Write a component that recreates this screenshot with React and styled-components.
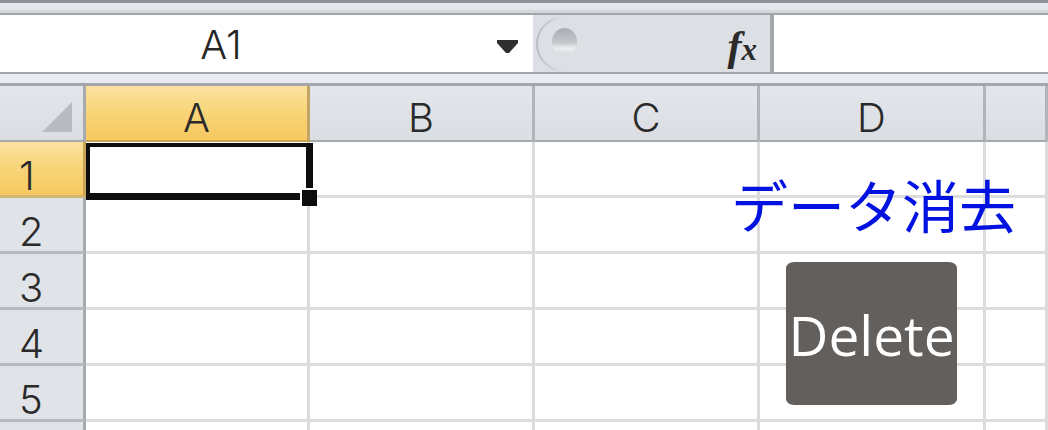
import React from "react";
import styled, { createGlobalStyle, css } from "styled-components";

const GlobalStyle = createGlobalStyle`
  html, body {
    margin: 0;
    padding: 0;
    background: #ffffff;
  }
`;

const Page = styled.div`
  position: relative;
  width: 1048px;
  height: 430px;
  overflow: hidden;
  background: #ffffff;
  font-family: "Liberation Sans", Arial, sans-serif;
  color: #262626;
`;

const TopStrip = styled.div`
  height: 13px;
  background: linear-gradient(
    to bottom,
    #8f9399 0,
    #8f9399 3px,
    #e6e9ed 3px,
    #e2e5e9 10px,
    #d3d7dc 10px,
    #d3d7dc 13px
  );
`;

const FormulaBar = styled.div`
  display: flex;
  height: 57px;
  border-top: 2px solid #a2a6ab;
  border-bottom: 2px solid #a2a6ab;
  background: #ffffff;
`;

const NameBox = styled.div`
  display: flex;
  align-items: center;
  width: 533px;
  flex: 0 0 533px;
`;

const thinFont = css`
  font-family: "Inter", "Liberation Sans", sans-serif;
  font-weight: 300;
  font-size: 40px;
  line-height: 1;
`;

const NameText = styled.div`
  ${thinFont};
  width: 442px;
  text-align: center;
  padding-top: 2px;
`;

const DropArrow = styled.svg`
  margin-left: 55px;
  margin-top: 5px;
`;

const FxZone = styled.div`
  display: flex;
  align-items: center;
  justify-content: space-between;
  width: 241px;
  flex: 0 0 241px;
  padding-right: 13px;
  box-sizing: border-box;
  background: #dcdfe3;
  border-right: 4px solid #a4a8ac;
`;

const FxLabel = styled.div`
  font-family: "Liberation Serif", "Times New Roman", serif;
  font-style: italic;
  font-weight: bold;
  color: #2b2b2b;
  line-height: 1;
  padding-top: 4px;
  font-size: 42px;
  white-space: nowrap;

  span {
    font-size: 31px;
  }
`;

const FormulaInput = styled.div`
  flex: 1;
  background: #ffffff;
`;

const Band = styled.div`
  height: 9px;
  background: #e9ebf3;
  border-bottom: 3px solid #a3a7ac;
`;

const Sheet = styled.div`
  display: grid;
  grid-template-columns: 86px 224px 225px 225px 226px 1fr;
  grid-template-rows: 56px repeat(6, 56px);
`;

const headerBase = css`
  ${thinFont};
  display: flex;
  box-sizing: border-box;
  color: #2a2a2a;
`;

const activeHeader = css`
  background: linear-gradient(to bottom, #fbe29f 0%, #f8d478 50%, #f6c85f 100%);
`;

const ColHeader = styled.div`
  ${headerBase};
  align-items: center;
  justify-content: center;
  padding-top: 10px;
  border-right: 3px solid #b1b5ba;
  border-bottom: 2px solid #a5a9ae;
  background: linear-gradient(to bottom, #e3e6ea 0%, #dadde2 100%);
  ${(p) => p.$active && activeHeader};
  ${(p) => p.$active && "border-bottom-color: #c9a457; border-right-color: #c2a466;"}
`;

const Corner = styled(ColHeader)`
  align-items: flex-end;
  justify-content: flex-end;
  padding: 0 11px 8px 0;
  border-right-color: #a7abb0;
`;

const RowHeader = styled.div`
  ${headerBase};
  align-items: center;
  padding: 14px 0 0 19px;
  border-right: 3px solid #a7abb0;
  border-bottom: 3px solid #b6babf;
  background: #e0e3e7;
  ${(p) => p.$active && activeHeader};
  ${(p) => p.$active && "border-bottom-color: #d3b574; border-right-color: #c9a457;"}
`;

const Cell = styled.div`
  position: relative;
  box-sizing: border-box;
  border-right: 3px solid #dcdcdc;
  border-bottom: 3px solid #dcdcdc;
`;

const Selection = styled.div`
  position: absolute;
  left: 0;
  top: 1px;
  width: 227px;
  height: 57px;
  box-sizing: border-box;
  border-style: solid;
  border-color: #0d0d0d;
  border-width: 4px 7px 7px 4px;
  z-index: 2;
`;

const FillHandle = styled.div`
  position: absolute;
  left: 216px;
  top: 48px;
  width: 15px;
  height: 16px;
  background: #0d0d0d;
  box-shadow: -2px -2px 0 0 #ffffff;
  z-index: 3;
`;

const DataLabel = styled.div`
  position: absolute;
  left: 731px;
  top: 169px;
  width: 284px;
  text-align: center;
  font-family: "Noto Sans CJK JP", "Noto Sans CJK SC", sans-serif;
  font-size: 57px;
  line-height: 1.2;
  color: #0011e0;
  white-space: nowrap;
`;

const DeleteButton = styled.div`
  position: absolute;
  left: 786px;
  top: 262px;
  width: 171px;
  height: 143px;
  display: flex;
  align-items: center;
  justify-content: center;
  border-radius: 8px / 6px;
  background: #625f5c;
  color: #ffffff;
  font-family: "Open Sans", "Noto Sans", sans-serif;
  font-size: 55px;
  line-height: 1;
  padding-top: 2px;
  box-sizing: border-box;
`;

const columns = ["A", "B", "C", "D", "E"];
const rows = [1, 2, 3, 4, 5, 6];

const CancelKnob = () => (
  <svg width="48" height="57" viewBox="0 0 48 57">
    <defs>
      <linearGradient id="knob" x1="0" y1="0" x2="0" y2="1">
        <stop offset="0" stopColor="#a9acb1" />
        <stop offset="0.55" stopColor="#c4c7cb" />
        <stop offset="0.75" stopColor="#eceef0" />
        <stop offset="1" stopColor="#d6d9dc" />
      </linearGradient>
      <linearGradient id="arc" x1="0" y1="0" x2="1" y2="0">
        <stop offset="0" stopColor="#b9bcc0" />
        <stop offset="1" stopColor="#dcdfe3" />
      </linearGradient>
    </defs>
    <path
      d="M31 2 A27 27 0 0 0 31 56"
      fill="none"
      stroke="url(#arc)"
      strokeWidth="2"
    />
    <ellipse cx="31.5" cy="26.5" rx="12.5" ry="13.5" fill="url(#knob)" />
  </svg>
);

const CornerMark = () => (
  <svg width="30" height="30" viewBox="0 0 30 30">
    <polygon points="30,0 30,30 0,30" fill="#b8bcc1" />
  </svg>
);

export default function App() {
  return (
    <Page>
      <GlobalStyle />
      <TopStrip />
      <FormulaBar>
        <NameBox>
          <NameText>A1</NameText>
          <DropArrow width="21" height="13" viewBox="0 0 21 13">
            <path d="M0 0 H21 V3 L12 13 H9 L0 3 Z" fill="#2e2e2e" />
          </DropArrow>
        </NameBox>
        <FxZone>
          <CancelKnob />
          <FxLabel>
            f<span>x</span>
          </FxLabel>
        </FxZone>
        <FormulaInput />
      </FormulaBar>
      <Band />
      <Sheet>
        <Corner>
          <CornerMark />
        </Corner>
        {columns.map((c) => (
          <ColHeader key={c} $active={c === "A"}>
            {c === "E" ? "" : c}
          </ColHeader>
        ))}
        {rows.map((r) => (
          <React.Fragment key={r}>
            <RowHeader $active={r === 1}>{r === 6 ? "" : r}</RowHeader>
            {columns.map((c) => (
              <Cell key={c}>
                {r === 1 && c === "A" && (
                  <>
                    <Selection />
                    <FillHandle />
                  </>
                )}
              </Cell>
            ))}
          </React.Fragment>
        ))}
      </Sheet>
      <DataLabel>データ消去</DataLabel>
      <DeleteButton>Delete</DeleteButton>
    </Page>
  );
}
